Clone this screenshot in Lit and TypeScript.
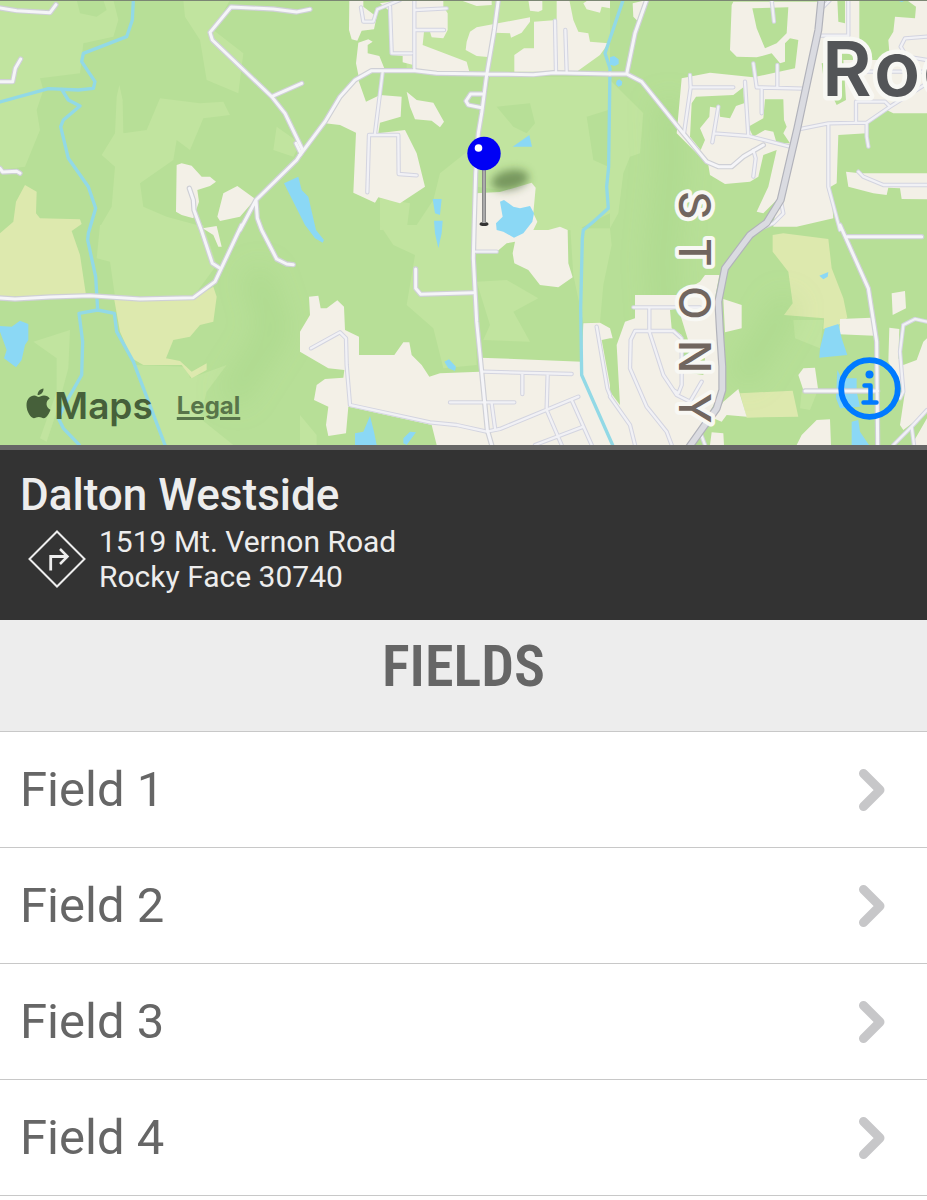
import { LitElement, html, svg, css } from "lit";
import { customElement, property } from "lit/decorators.js";

interface Tile {
  x: number;
  y: number;
  meadow: string;
  field: string;
  built: string;
  wood: string;
  water: string;
  stream: string;
  street: string;
  road: string;
}

// Each tile is drawn at three units to the pixel from its own origin.
const TILES: Tile[] = [
  {
    x: 0,
    y: 0,
    meadow:
      "M0 0H340L355 60L340 110L250 130L240 220L120 235L130 270L110 330L120 390L75 500L0 510ZM350 290L358 255L368 300L370 400L440 390L480 295L600 310L670 305L690 345L610 355L570 450L530 420L520 480L420 550L430 620L500 650L610 680H300L335 620L345 500L305 465L345 400ZM550 0H690L640 90L730 160L715 280L620 240L600 120L555 50ZM830 380L900 430L880 470L820 450Z",
    field: "",
    built:
      "M530 495L545 490L575 497L605 530L630 530L648 545L630 558L592 570L597 605L580 655L545 645L528 635ZM670 580L712 558L766 597L720 650L660 663L652 650Z",
    wood: "M230 0H310L320 30L290 50L240 40Z",
    water: "M852 550L895 530L905 570L925 590L948 690L972 720L968 728L945 715L915 675Z",
    stream:
      "M400 0L397 60L380 110L250 160L245 185L285 245L280 265L235 270L145 266L0 306M185 268L205 300L240 318L190 360L182 380L205 475L265 560L287 625L265 700L263 720L287 830L293 930",
    street: "",
    road: "M0 24L50 32L150 38L168 14M0 245H38L46 205L62 177M0 505L8 516L50 514L60 520M930 28L890 36L820 27L693 21L630 97L637 120L815 290L855 340L908 450M815 290L905 250M720 690L768 600L890 480L908 452M568 565L580 600L582 630L604 690L637 790L660 805M768 600L772 655L785 690L830 777L860 792L880 794",
  },
  {
    x: 300,
    y: 0,
    meadow:
      "M570 230H930V640L830 690L700 690L700 555L600 570L530 560L545 370ZM240 595L330 610L320 690H240ZM340 690L400 600L420 520L520 440L522 690ZM320 0H930V215H320Z",
    field: "",
    built:
      "M148 0H190V20L230 50L222 88L185 92L172 122L155 118L147 90ZM240 10L300 0H430V20L443 40V90L430 115L395 112L390 95H372L368 135L500 185L508 215H345L340 195L308 187V168L275 165L265 30ZM175 128L205 118L218 125L203 135V160L238 168L255 210L175 225L168 190ZM480 0H575V15L530 18ZM500 125L510 95L530 82L690 52V65L665 98L633 113L630 100L585 98L572 172L530 168L497 150ZM685 0H727V30L715 35L690 32ZM770 0H808L820 60L835 95L865 100L870 125L925 130L900 165L830 215H643V165L672 145H702V65L770 60V38ZM850 10L865 0H930V25L905 20L900 38L860 28ZM75 370L120 290L175 240L198 305L240 285L305 290L302 350L240 368L235 400L315 390L350 460L375 560L300 610L235 592L225 608L160 578L168 398L120 375ZM320 275L350 300L400 308L432 365L420 382L395 362L345 358L330 320ZM527 580L600 576L695 548L707 563L700 640L712 665L700 690L745 690L780 680L803 690L805 790L818 832L775 862L720 855L685 810L643 790L638 760L645 725L620 730L590 755H522Z",
    wood: "M590 320L690 310L705 370L680 400L640 380ZM860 350L925 330V500L880 480Z",
    water:
      "M600 605L612 600L640 620L660 625L690 618L702 640L697 665L670 700L642 713L610 695L590 690L588 670L608 650ZM638 440L688 405L696 440ZM398 597H425L420 645L405 640ZM402 662H428L425 700L415 745L405 700Z",
    stream:
      "M970 -2L915 160L930 205L926 500L920 560L925 625L880 665L850 690L847 715L842 925L845 1125L940 1340",
    street:
      "M183 22L190 65H220L232 28L300 0M270 20L275 160H335M343 0V212M345 30L440 25M345 90H432M248 215L225 400M202 577L207 405H295L296 522L350 526M765 62L768 215M796 90L800 215",
    road: "M-12 430L0 455M0 465L75 365L120 290L165 240L215 212L345 212L410 220L560 222L700 224L760 218L930 222M595 0L583 90L560 225L545 340L535 400L527 520L522 690L520 775L530 965L545 1115L562 1290L575 1335M550 282H512L498 303L505 315L545 323",
  },
  {
    x: 610,
    y: 0,
    meadow: "M0 240L70 310L100 340L90 460L60 470L40 520L25 640L0 685Z",
    field: "",
    built:
      "M68 10L110 0L82 62L70 50ZM365 15L370 5H630L640 0H951V340H850L830 330L775 370L770 400L685 405L680 550L662 560L670 655L560 680H490L500 600L460 640L440 635L475 560L500 450L460 465L445 530L420 545L345 552L300 525L295 495L200 400L215 235L300 218L430 232L555 205L565 120L540 115L525 130V185L510 190L485 160L440 172L380 170L360 150ZM708 515L750 520H951V598L875 597L870 565L835 563L830 585L790 580L715 560Z",
    wood: "M427 25L535 22L530 100L500 130L465 145L440 85ZM258 290L370 285L400 262L402 310L378 318L360 355L330 350L328 325L300 320L298 350L270 385L285 420L272 450L240 410L245 310ZM465 298H520L522 360L530 380L520 400L540 430L500 430L490 395L465 390L430 410L415 380L460 355ZM682 0H705V70L685 65ZM748 0H890L918 20L915 55L855 50L850 95L835 120L840 180H690V155L748 120ZM635 190L700 180L708 300L680 315L640 230Z",
    water:
      "M0 172L12 168L26 178L26 192L14 198L0 194ZM20 242L28 238L37 245L35 256L25 260L18 252ZM858 0H890L875 6Z",
    stream: "",
    street:
      "M240 225L242 262H370M242 262L222 400M405 245L415 408M430 190L440 262L580 266M502 195V262M455 268V340M325 320L307 427M312 400L415 408L540 440M430 450L437 475L430 530M485 0L492 65M640 20L660 0M628 107H715V0M565 388L655 370L770 368L840 320L951 250M738 365V305H825L840 320M770 370V410L775 440M655 375V560L690 690M745 515L760 530L820 555H951M512 600L520 640L490 670L440 690M951 110L885 115L872 140L890 170L951 180M760 215H951",
    road: "M110 0L75 100L50 222M0 222H50L95 245L220 400L290 485L325 500H365L400 470L460 435",
  },
  {
    x: 0,
    y: 225,
    meadow:
      "M300 0H610L650 120L580 215L345 215L330 110L290 100ZM100 350L210 315L205 430L170 560L140 650L120 640L170 500L170 400ZM400 420L560 425L570 460L680 420L620 500L600 580L700 660H490Z",
    field:
      "M0 25L40 -10L48 -70L75 -120L110 -100L108 -35L120 -20L240 -17L245 -3L215 18L240 90L258 210L0 215ZM343 225L580 218L640 185L650 215L640 290L600 300L570 335L520 345L498 400L540 408L575 440L620 415L620 435L575 460L545 420L430 420L395 400L360 320Z",
    built: "M608 10L650 3L665 65L655 65L640 30Z",
    wood: "",
    water: "M0 303L35 305L60 287L85 297L85 345L75 360L65 405L48 427L12 400L20 375L0 320Z",
    stream:
      "M237 265L293 255L343 265L350 320L400 410L495 660M237 265L248 350L245 450L205 520L175 580L190 610L238 660",
    street: "",
    road: "M0 219L45 222L150 216L270 212L420 222L580 218L645 170L725 0",
  },
  {
    x: 300,
    y: 225,
    meadow:
      "M240 0H520L530 420L430 430L400 310L320 240L345 90L280 60ZM530 170L620 165L715 220L640 260L690 350L550 345L570 300ZM810 -5L850 10V293L820 150ZM850 10H930L935 60L910 180L900 293H850ZM0 570L50 630V660H0Z",
    field: "",
    built:
      "M0 380V320L30 270L27 215L55 212L62 250H80L112 226L132 245L135 315L177 335V390H283L310 352H328L335 390L365 420L388 455L420 445L540 440V398L845 410L850 295L900 293L930 310V340L905 345L930 480V660H410L395 600L145 545L138 625L85 633L78 600L85 545L42 525L50 480L75 462L130 458L133 435L85 430Z",
    wood: "",
    water:
      "M433 410L447 403L468 425L465 438L445 430ZM165 625L190 620L210 573L222 620L230 660H165ZM310 640L330 620L348 622L320 660L310 655Z",
    stream: "",
    street:
      "M33 370L120 322L138 340L140 420L150 540L390 592L470 600L560 620L600 612L835 515M548 440L815 447M667 447V507M743 447L740 550M450 532H643M575 535L585 610M740 555L785 660M815 525L875 660M705 660L850 605M890 305L922 490L930 510M525 80H590",
    road: "M347 132V190L362 208L520 203",
  },
  {
    x: 610,
    y: 225,
    meadow: "M550 285H640L630 370L555 340ZM575 500L620 505L600 555L570 550Z",
    field:
      "M488 30L520 25L655 42L665 130L700 220L712 278L685 300L640 312L642 280L522 270L548 235L535 140L488 80ZM390 505L548 497L565 575L410 578Z",
    built:
      "M0 310L8 340H0ZM75 210L200 210L270 170L285 150H328L315 220L330 340L332 500L300 560L230 660H0V500L30 540L20 360L45 290L75 280ZM340 222L395 240V310L345 322ZM340 530L385 492L410 575L350 570L335 590L310 580ZM565 450L580 430L615 428L625 498L580 495ZM690 282L785 278L792 332L688 328ZM845 205L885 198L888 250L848 270ZM838 308L868 312L865 400L880 420L920 405L940 350L951 340V560L880 615L870 600L885 500L835 410ZM560 660L575 630L620 585L660 583L663 660ZM300 660L305 622L340 625L342 660ZM905 660L951 580V660Z",
    wood: "M180 255L205 250L245 380L285 400L280 450L215 440L215 330L185 310Z",
    water:
      "M628 152L655 141L653 155L640 163ZM645 310L685 297L695 340L712 390L628 398L630 370ZM682 435L695 460H740V500L750 545L690 550L678 520ZM725 590L745 585L750 620L777 660H725Z",
    stream: "",
    street:
      "M70 247H270M118 250V315M62 345L75 318H190L215 340V480L205 505L190 495M62 345L60 430L110 545L170 620L185 660M118 320L160 450L200 510L240 530M240 530L275 470M0 515L60 600L75 660M880 300L870 380L880 500L870 520M880 300L915 282L951 290M850 660L905 605L951 555M905 605L912 660M270 620L285 660",
    road: "M690 0L775 190L800 350L803 660M710 35H935M585 498H803",
  },
];

@customElement("venue-map")
export class VenueMap extends LitElement {
  static styles = css`
    :host {
      display: block;
      position: relative;
      height: 445px;
      overflow: hidden;
      background: #b7df97;
      border-bottom: 5px solid #666;
      font-family: Inter, "Liberation Sans", sans-serif;
    }
    .canvas {
      display: block;
      width: 100%;
      height: 100%;
    }
    .meadow { fill: #c1e49f; }
    .field { fill: #dde9ae; }
    .built { fill: #f3f0e7; }
    .wood { fill: #b7df97; }
    .water { fill: #8bd8f5; }
    .line {
      fill: none;
      stroke-linejoin: round;
      stroke-linecap: round;
    }
    .stream { stroke: #92d9e6; stroke-width: 10; }
    .road-edge { stroke: #cfd0d6; stroke-width: 16; }
    .road { stroke: #f5f5f8; stroke-width: 9; }
    .street-edge { stroke: #d3d4e0; stroke-width: 13; }
    .street { stroke: #f1f1f5; stroke-width: 7; }
    .highway-edge { stroke: #b1b2ba; stroke-width: 24; }
    .highway { stroke: #dadbe1; stroke-width: 17; }
    .label {
      paint-order: stroke;
      stroke: #f8f8f4;
      stroke-linejoin: round;
    }
    .city {
      font-size: 76px;
      font-weight: 600;
      fill: #535558;
      stroke-width: 9px;
    }
    .district {
      font-size: 44px;
      font-weight: 500;
      fill: #71665f;
      stroke-width: 8px;
    }
    .attribution {
      position: absolute;
      left: 26px;
      bottom: 15px;
      display: flex;
      align-items: center;
      color: #46603a;
    }
    .apple { width: 25px; height: 32px; margin-bottom: 4px; }
    .brand {
      margin-left: 3px;
      font-size: 37px;
      line-height: 48px;
      font-weight: 600;
    }
    .legal {
      margin-left: 24px;
      font-size: 24px;
      line-height: 48px;
      font-weight: 700;
      color: #58754a;
      text-decoration-thickness: 3px;
      text-underline-offset: 3px;
    }
    .info {
      position: absolute;
      right: 26px;
      bottom: 25px;
      padding: 0;
      border: 0;
      background: none;
      line-height: 0;
      cursor: pointer;
    }
  `;

  private layer(kind: "meadow" | "field" | "built" | "wood" | "water") {
    return TILES.map(
      (t) => svg`<path class=${kind} transform="translate(${t.x} ${t.y}) scale(.33333)" d=${t[kind]}></path>`
    );
  }

  private lines(kind: "stream" | "street" | "road", style: string) {
    return TILES.map(
      (t) => svg`<path class="line ${style}" transform="translate(${t.x} ${t.y}) scale(.33333)" d=${t[kind]}></path>`
    );
  }

  render() {
    const highway =
      "M635 -10L625 90L562 385L512 600L470 668L420 705L345 805L325 905L330 995L337 1100V1170L320 1225L235 1345";
    return html`
      <svg class="canvas" viewBox="0 0 927 445" preserveAspectRatio="xMidYMid slice" role="img" aria-label="Map of Dalton Westside">
        <defs>
          <filter id="soft" x="-50%" y="-50%" width="200%" height="200%"><feGaussianBlur stdDeviation="4"></feGaussianBlur></filter>
          <filter id="relief" x="-50%" y="-50%" width="200%" height="200%"><feGaussianBlur stdDeviation="14"></feGaussianBlur></filter>
          <linearGradient id="stem"><stop offset="0" stop-color="#777"></stop><stop offset=".5" stop-color="#bbb"></stop><stop offset="1" stop-color="#777"></stop></linearGradient>
        </defs>
        ${this.layer("meadow")} ${this.layer("field")}
        <g filter="url(#relief)" fill="none" stroke="#8cc873" stroke-opacity=".22" stroke-width="26">
          <path d="M668 100L672 160L662 260L672 400"></path>
          <path d="M255 270L275 330L230 400"></path>
          <path d="M790 300L760 350L740 380"></path>
        </g>
        ${this.layer("built")} ${this.layer("wood")}
        ${this.lines("stream", "stream")} ${this.layer("water")}
        ${this.lines("street", "street-edge")} ${this.lines("road", "road-edge")}
        ${this.lines("street", "street")} ${this.lines("road", "road")}
        <g transform="translate(610 0) scale(.33333)">
          <path class="line highway-edge" d=${highway}></path>
          <path class="line highway" d=${highway}></path>
        </g>
        <text class="label city" x="822 874 923" y="96">Roc</text>
        <text class="label district" transform="translate(679 0) rotate(90)" x="191 238 286 340 393" y="0">STONY</text>
        <ellipse cx="510" cy="180" rx="19" ry="10" fill="#3c5a28" fill-opacity=".55" transform="rotate(-12 510 180)" filter="url(#soft)"></ellipse>
        <ellipse cx="484" cy="224" rx="4.500" ry="2" fill="#333"></ellipse>
        <rect x="482" y="168" width="4" height="55" fill="url(#stem)"></rect>
        <circle cx="484" cy="153.500" r="16.700" fill="#0000f5"></circle>
        <circle cx="478.500" cy="148" r="3.800" fill="#fff"></circle>
        <rect width="927" height="1" fill="#7b8673"></rect>
      </svg>
      <div class="attribution">
        <svg class="apple" viewBox="0 0 25 32" fill="currentColor" aria-hidden="true">
          <path d="M17.500 0.500C17.700 4.500 14.600 7.200 11.600 7C11.400 3.700 14.400 .8 17.500 .5ZM12.500 9C13.900 9 15.500 7.500 18 7.500C20.500 7.500 22.500 8.700 23.700 10.500C19 13.200 19.800 19.800 24.500 21.700C23.500 24.600 20.700 30.200 17.800 30.200C15.900 30.200 15 29 12.800 29C10.500 29 9.600 30.200 7.800 30.200C4.800 30.200 .5 23.500 .5 17.300C.5 11.200 4.300 7.600 8.200 7.600C10.200 7.600 11.500 9 12.500 9Z"></path>
        </svg>
        <span class="brand">Maps</span>
        <a class="legal" href="#legal">Legal</a>
      </div>
      <button class="info" type="button" aria-label="Map information">
        <svg width="63" height="63" viewBox="0 0 63 63" fill="none" stroke="#007aff" aria-hidden="true">
          <circle cx="31.500" cy="31.500" r="28.300" stroke-width="5.800"></circle>
          <circle cx="31.500" cy="17.500" r="4" fill="#007aff" stroke="none"></circle>
          <path d="M26.500 28.500H32.500V45.500M25.500 45.500H38.500" stroke-width="4.500" stroke-linecap="round" stroke-linejoin="round"></path>
        </svg>
      </button>
    `;
  }
}

@customElement("field-row")
export class FieldRow extends LitElement {
  @property() label = "";
  @property() href = "#";

  static styles = css`
    :host { display: block; }
    .row {
      display: flex;
      align-items: center;
      justify-content: space-between;
      padding: 24px 40px 24px 20px;
      border-bottom: 1px solid #c8c8c8;
      background: #fff;
      color: #666;
      font-size: 49px;
      line-height: 67px;
      text-decoration: none;
    }
    .chevron { display: block; width: 30px; height: 44px; }
  `;

  render() {
    return html`<a class="row" href=${this.href}>
      <span>${this.label}</span>
      <svg class="chevron" viewBox="0 0 30 44" fill="none" stroke="#c7c7c9" stroke-width="9" stroke-linecap="round" stroke-linejoin="round" aria-hidden="true">
        <path d="M6.500 5.500L23 22L6.500 38.500"></path>
      </svg>
    </a>`;
  }
}

@customElement("app-root")
export class AppRoot extends LitElement {
  @property({ attribute: false }) fields = ["Field 1", "Field 2", "Field 3", "Field 4"];

  static styles = css`
    :host {
      display: block;
      min-height: 100vh;
      background: #fff;
      font-family: Roboto, "Liberation Sans", sans-serif;
    }
    .venue {
      padding: 16px 20px 24px;
      background: #333;
      color: #ededed;
    }
    .name {
      margin: 0;
      font-size: 44px;
      line-height: 58px;
      font-weight: 500;
    }
    .directions {
      display: flex;
      align-items: center;
      gap: 13px;
      padding: 0 0 2px 8px;
      color: inherit;
      text-decoration: none;
    }
    .sign { display: block; width: 58px; height: 58px; }
    .address {
      font-size: 30px;
      line-height: 35px;
      font-style: normal;
    }
    .heading {
      margin: 0;
      padding: 8px 20px 27px;
      border-bottom: 1px solid #c8c8c8;
      background: #ededed;
      color: #666;
      font-family: "Roboto Condensed", "Open Sans Condensed", "Liberation Sans Narrow", Roboto, sans-serif;
      font-size: 58px;
      line-height: 76px;
      font-weight: 600;
      text-align: center;
    }
    .fields {
      margin: 0;
      padding: 0;
      list-style: none;
    }
  `;

  render() {
    return html`
      <venue-map></venue-map>
      <header class="venue">
        <h1 class="name">Dalton Westside</h1>
        <a class="directions" href="#directions">
          <svg class="sign" viewBox="0 0 58 58" fill="none" stroke="currentColor" stroke-width="2" aria-hidden="true">
            <path d="M29 1.500L56.500 29L29 56.500L1.500 29Z"></path>
            <path d="M22.700 40.500V26.500H39" stroke-width="2.800"></path>
            <path d="M32 19L39.500 26.500L32 34" stroke-width="2.500"></path>
          </svg>
          <address class="address">1519 Mt. Vernon Road<br />Rocky Face 30740</address>
        </a>
      </header>
      <main>
        <h2 class="heading">FIELDS</h2>
        <ul class="fields">
          ${this.fields.map(
            (name, i) => html`<li><field-row .label=${name} .href=${`#field-${i + 1}`}></field-row></li>`
          )}
        </ul>
      </main>
    `;
  }
}
